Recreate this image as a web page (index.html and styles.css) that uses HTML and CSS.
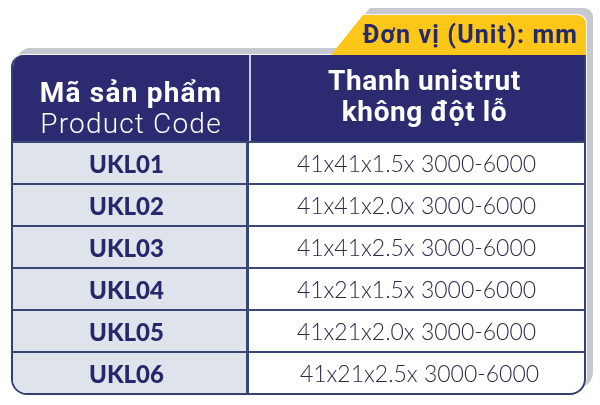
FILE: index.html
```html
<!DOCTYPE html>
<html lang="vi">
<head>
<meta charset="utf-8">
<title>Thanh unistrut không đột lỗ</title>
<link rel="stylesheet" href="styles.css">
</head>
<body>
<div class="wrap">
  <div class="tabrow">
    <div class="tab">Đơn vị (Unit): mm</div>
  </div>
  <div class="table">
    <div class="th th-code">
      <span class="th-bold">Mã sản phẩm</span>
      <span class="th-light">Product Code</span>
    </div>
    <div class="th th-name">
      <span class="th-bold">Thanh unistrut</span>
      <span class="th-bold">không đột lỗ</span>
    </div>
    <div class="code">UKL01</div><div class="val">41x41x1.5x 3000-6000</div>
    <div class="code">UKL02</div><div class="val">41x41x2.0x 3000-6000</div>
    <div class="code">UKL03</div><div class="val">41x41x2.5x 3000-6000</div>
    <div class="code">UKL04</div><div class="val">41x21x1.5x 3000-6000</div>
    <div class="code">UKL05</div><div class="val">41x21x2.0x 3000-6000</div>
    <div class="code">UKL06</div><div class="val val-last">41x21x2.5x 3000-6000</div>
  </div>
</div>
</body>
</html>
```
FILE: styles.css
```css
html, body {
  margin: 0;
  padding: 0;
  background: #ffffff;
}

.wrap {
  width: 575px;
  padding: 15px 0 0 11px;
  filter: drop-shadow(1px -1px 0 #f4f5f8) drop-shadow(6px -6px 0 #c6c9d0);
}

.tabrow {
  display: flex;
  justify-content: flex-end;
}

.tab {
  width: 255px;
  height: 40px;
  box-sizing: border-box;
  padding: 5px 8px 0 0;
  background: #fcc719;
  border-top-right-radius: 9px;
  clip-path: polygon(32px 0, 100% 0, 100% 100%, 0 100%);
  color: #272a6a;
  font-family: Roboto, "Liberation Sans", sans-serif;
  font-weight: 700;
  font-size: 25px;
  letter-spacing: 1.1px;
  text-align: right;
  line-height: 30px;
}

.table {
  display: grid;
  grid-template-columns: 236px 1fr;
  grid-auto-rows: 42px;
  grid-template-rows: 86px;
  border: 2px solid #35416f;
  border-top: none;
  border-radius: 12px 0 16px 16px;
  overflow: hidden;
  background: #ffffff;
}

.th {
  background: #2c2b71;
  color: #ffffff;
  display: flex;
  flex-direction: column;
  align-items: center;
  justify-content: center;
  font-family: Roboto, "Liberation Sans", sans-serif;
  font-size: 28px;
  letter-spacing: 0.6px;
  line-height: 31px;
}

.th-code {
  padding-top: 20px;
  letter-spacing: 1.2px;
}

.th-name {
  border-left: 2px solid #c9cce0;
  padding-bottom: 4px;
  padding-left: 14px;
}

.th-bold {
  font-weight: 700;
}

.th-light {
  font-weight: 300;
}

.code {
  background: #dfe3eb;
  border-top: 2px solid #3a4776;
  border-right: 3px solid #3a4776;
  color: #26286a;
  font-family: Lato, Roboto, sans-serif;
  font-weight: 900;
  font-size: 24px;
  display: flex;
  align-items: center;
  justify-content: center;
  padding-right: 6px;
}

.val {
  border-top: 2px solid #3a4776;
  color: #2b2b48;
  font-family: Lato, "Open Sans", sans-serif;
  font-weight: 300;
  font-size: 23px;
  display: flex;
  align-items: center;
  justify-content: center;
}

.val-last {
  padding-left: 6px;
}
```
